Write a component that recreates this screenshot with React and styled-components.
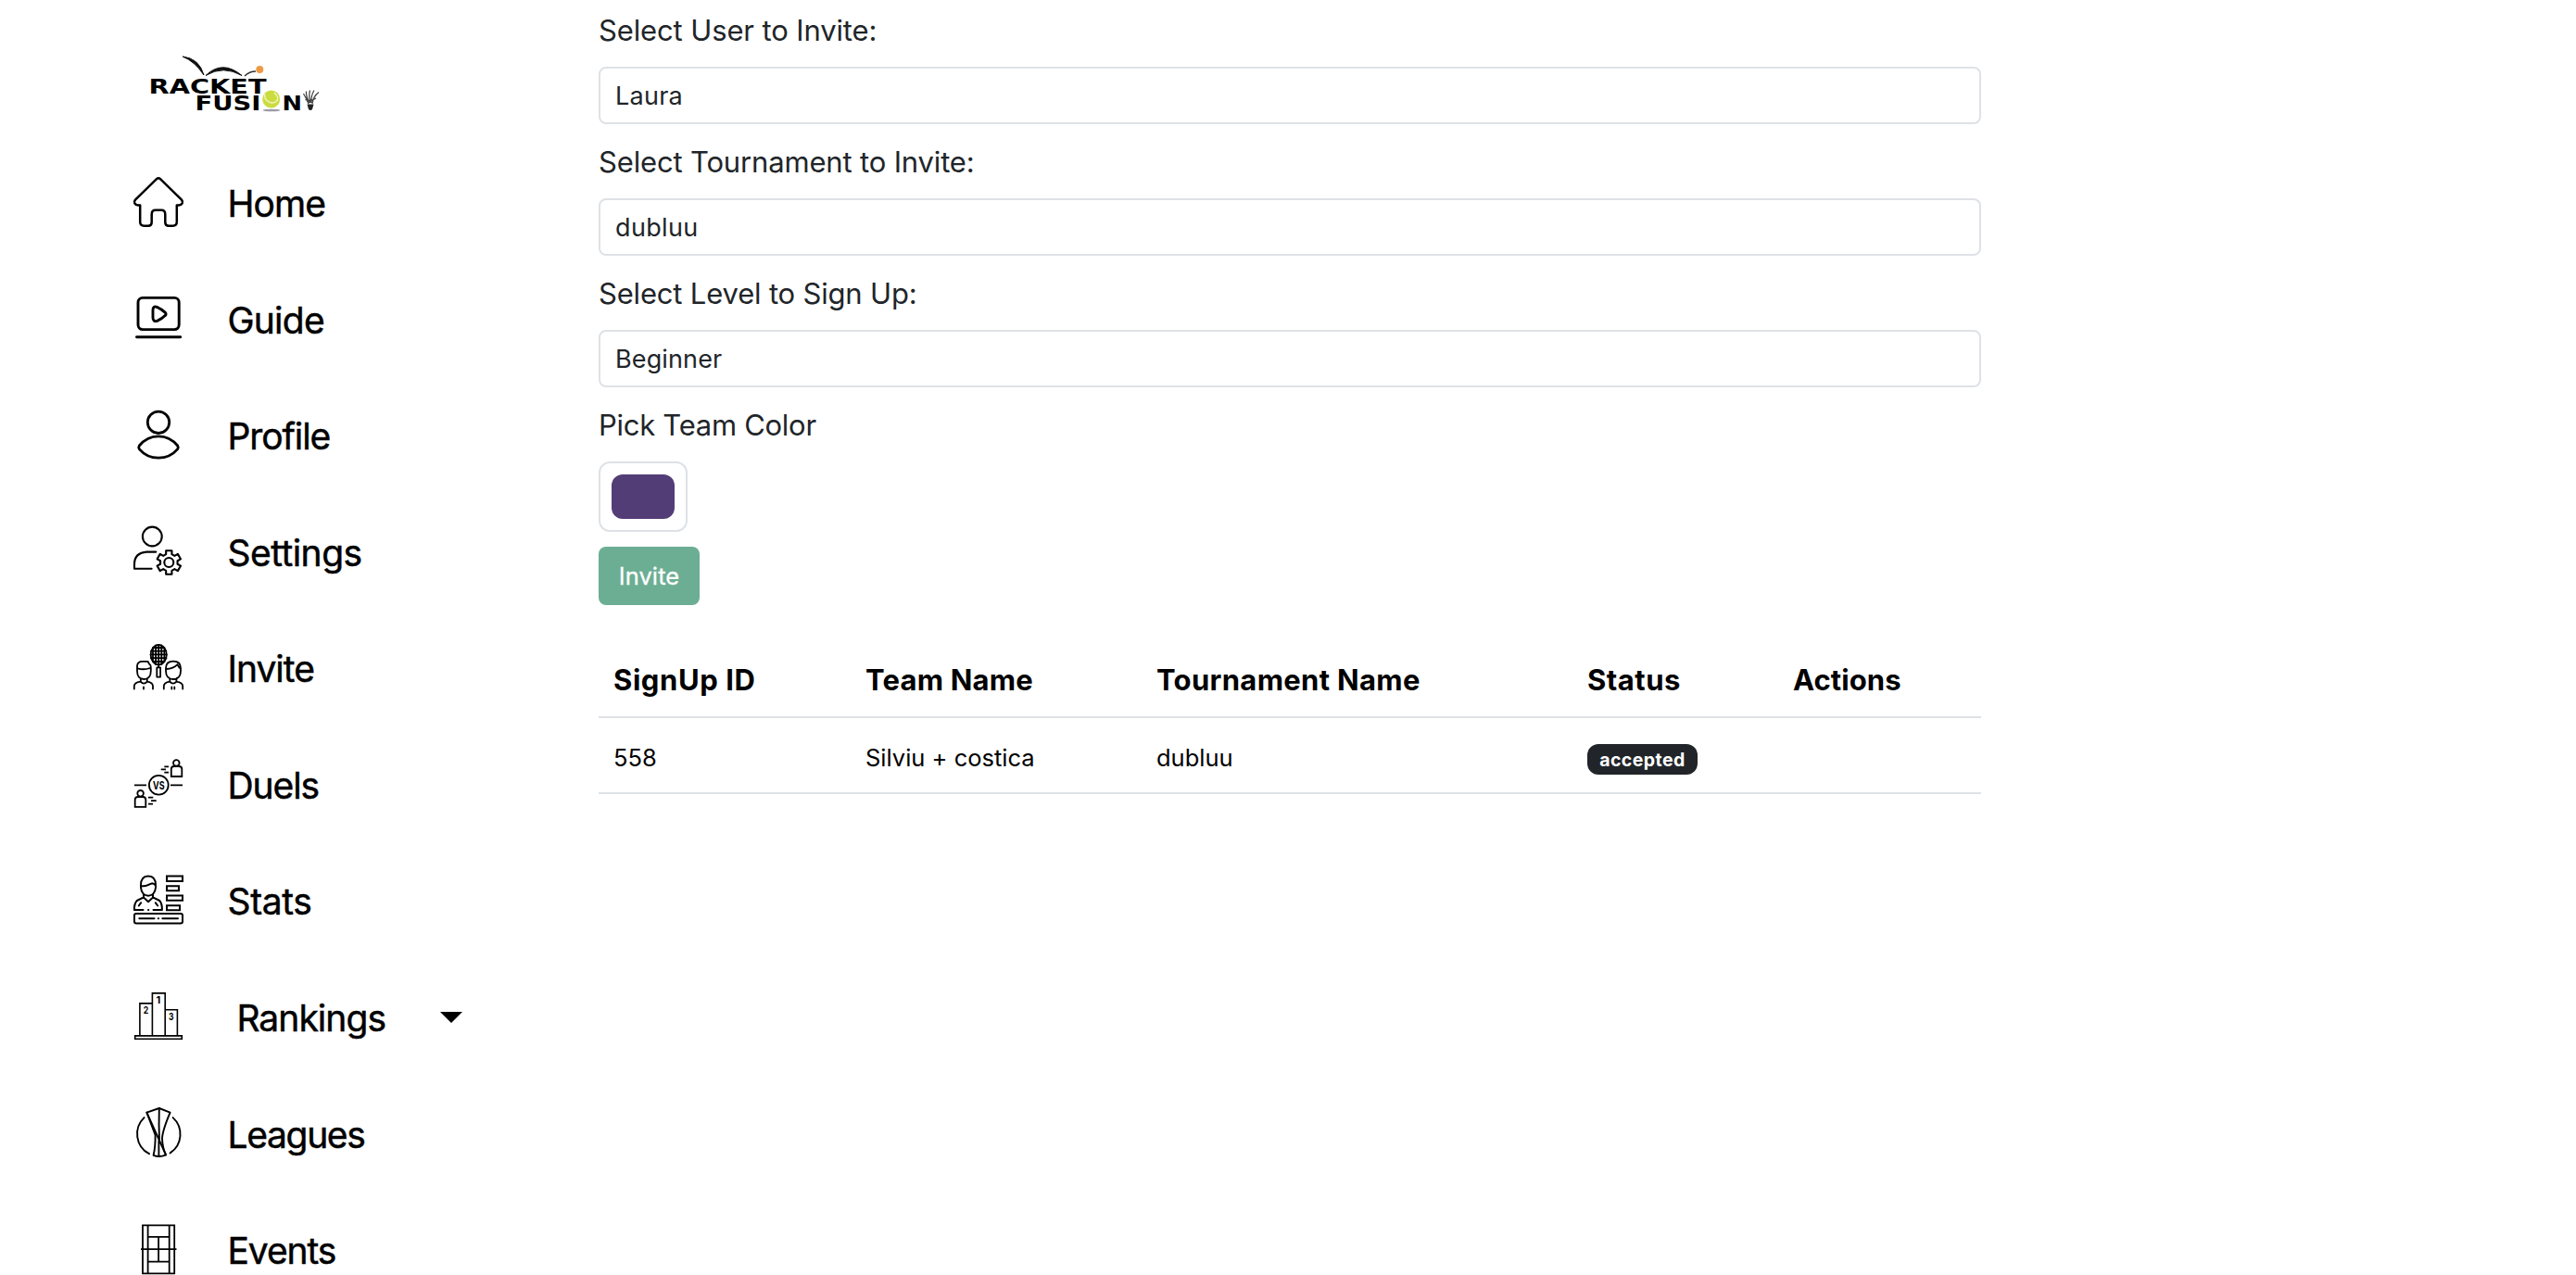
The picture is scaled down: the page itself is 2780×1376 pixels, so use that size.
import React from "react";
import styled, { createGlobalStyle } from "styled-components";

const GlobalStyle = createGlobalStyle`
  * { box-sizing: border-box; }
  body { margin: 0; background: #fff; }
`;

const Page = styled.div`
  display: flex;
  height: 100vh;
  overflow: hidden;
  background: #fff;
  color: #212529;
  font-family: Inter, "Liberation Sans", sans-serif;
  font-kerning: normal;
`;

const Sidebar = styled.aside`
  flex: none;
  width: 646px;
  padding: 50px 0 0 144px;
`;

const LogoLink = styled.div`
  height: 104.9px;
  padding-left: 6px;
  svg { display: block; }
`;

const NavItem = styled.div`
  display: flex;
  align-items: center;
  height: 125.55px;
`;

const NavIcon = styled.svg`
  flex: none;
  width: 54px;
  height: 54px;
  fill: none;
  stroke: #000;
  stroke-width: ${(p) => p.$stroke || 2};
  stroke-linecap: ${(p) => (p.$square ? "butt" : "round")};
  stroke-linejoin: ${(p) => (p.$square ? "miter" : "round")};
  overflow: visible;

  text {
    fill: #000;
    stroke: none;
    font-family: Inter, sans-serif;
    font-weight: 700;
    text-anchor: middle;
  }
`;

const NavLabel = styled.span`
  margin-left: ${(p) => (p.$indent ? 57.4 : 47.5)}px;
  padding-top: 5px;
  color: #000;
  font-size: 39px;
  font-weight: 400;
  line-height: 50px;
  letter-spacing: ${(p) => p.$track}px;
  -webkit-text-stroke: 0.5px #000;
  white-space: nowrap;
`;

const Caret = styled.i`
  margin: 4px 0 0 59px;
  border: 12px solid transparent;
  border-top-color: #000;
  border-bottom: 0;
`;

const Main = styled.main`
  width: 1492px;
  padding-top: 10px;
`;

const Field = styled.div`
  margin-bottom: ${(p) => (p.$last ? 16 : 17)}px;
`;

const Label = styled.label`
  display: block;
  margin-bottom: 16px;
  padding-bottom: 0;
  font-size: 31px;
  line-height: 46px;
  letter-spacing: ${(p) => p.$track}px;
`;

const FieldStack = styled.div`
  display: grid;
  gap: 18px;
  margin-bottom: 16px;
  ${Field} { margin-bottom: 0; }
`;

const SelectBox = styled.div`
  display: flex;
  align-items: center;
  height: 62px;
  padding: 0 16px;
  border: 2px solid #dee2e6;
  border-radius: 8px;
  font-size: 27px;
  letter-spacing: ${(p) => p.$track}px;
`;

const ColorBox = styled.div`
  width: 96px;
  height: 76px;
  padding: 12px;
  border: 2px solid #dee2e6;
  border-radius: 12px;
`;

const Swatch = styled.div`
  width: 68px;
  height: 48px;
  border-radius: 12px;
  background: #533d76;
`;

const Button = styled.button`
  display: block;
  width: 109px;
  height: 63px;
  padding: 0;
  border: 0;
  border-radius: 8px;
  background: #6cae94;
  color: #fff;
  font: 400 25.5px Inter, "Liberation Sans", sans-serif;
  letter-spacing: 0.09px;
  -webkit-text-stroke: 0.3px #fff;
`;

const Table = styled.div`
  margin-top: 40px;
  color: #000;
`;

const Row = styled.div`
  display: grid;
  grid-template-columns: 272px 314px 465px 222px 219px;
  align-items: center;
  height: 82px;
  border-bottom: 2px solid #dee2e6;
`;

const HeadCell = styled.div`
  padding: 0 0 0 16px;
  font-size: 31px;
  font-weight: 700;
  letter-spacing: ${(p) => p.$track}px;
`;

const Cell = styled.div`
  padding: 4px 0 0 16px;
  font-size: 25.5px;
`;

const BadgeCell = styled.div`
  padding: 8px 0 0 16px;
`;

const Badge = styled.span`
  display: flex;
  align-items: center;
  justify-content: center;
  width: 119px;
  height: 33px;
  padding-top: 1px;
  border-radius: 12px;
  background: #212529;
  color: #fff;
  font-size: 19.5px;
  font-weight: 700;
  letter-spacing: 0.45px;
`;

const Logo = () => (
  <svg width="210" height="80" viewBox="0 0 210 80">
    <g fill="#000" fontFamily="'DejaVu Sans', sans-serif" fontWeight="700" fontSize="21.5">
      <text x="10.5" y="50.6" textLength="127" lengthAdjust="spacingAndGlyphs">RACKET</text>
      <text x="60.5" y="68.6" textLength="71" lengthAdjust="spacingAndGlyphs">FUSI</text>
      <text x="154.5" y="68.6" textLength="21.5" lengthAdjust="spacingAndGlyphs">N</text>
    </g>
    <path d="M47 11Q65 13 70 31Q60 16 47 11Z" fill="#111" stroke="#111" strokeWidth="1" />
    <path d="M72 31.5Q90 14 111 31.5Q91 20 72 31.5Z" fill="#111" stroke="#111" strokeWidth="1" />
    <path d="M114 32Q119 27 126 27" fill="none" stroke="#333" strokeWidth="1.4" />
    <circle cx="130.3" cy="25" r="4" fill="#ee9a45" />
    <ellipse cx="143" cy="69" rx="9.5" ry="1.3" fill="#9b9ba8" />
    <circle cx="142.7" cy="57" r="9.5" fill="#cbdc40" />
    <path d="M135.5 51C135 60 144 64 149.5 58Q151 55 146 50" fill="none" stroke="#f0f4c4" strokeWidth="1.4" />
    <path d="M183 62Q180 55 177.5 51M184 61Q180 54 180.5 48.5M185 61Q183 53 184.5 47.5M186 61Q185.500 53 189 47.500M187 62Q188 54 194 49.500M179.500 57.500Q185 60 191 56" fill="none" stroke="#444" strokeWidth="1.3" />
    <path d="M181.500 62.500h7l-1.500 5.500q-2 2-4 0z" fill="#222" />
  </svg>
);

const HomeIcon = () => (
  <NavIcon viewBox="0 0 54 54" $stroke={2.5}>
    <path d="M25 2.2Q27 .4 29 2.2L52 24.6Q53.6 26.6 52.7 28.4Q51.6 30.4 49 30.4H46.8V48.5Q46.8 52.7 42.6 52.7H38Q34.3 52.7 34.3 49V40.5Q34.3 35.8 30.3 35.8H23.7Q19.7 35.8 19.7 40.5V49Q19.7 52.7 16 52.7H11.4Q7.2 52.7 7.2 48.5V30.4H5Q2.4 30.4 1.3 28.4Q.4 26.6 2 24.6Z" />
  </NavIcon>
);

const GuideIcon = () => (
  <NavIcon viewBox="0 0 54 54" $stroke={2.9}>
    <rect x="5" y="5.4" width="44.2" height="34.2" rx="5" />
    <path d="M3.5 47.8H50.7M21 18.5Q21 14 25.4 15.4Q31 18 34.4 21.4Q35.8 23 34.2 24.6Q31 28 25.6 30.4Q21 31.4 21 26.8Z" />
  </NavIcon>
);

const ProfileIcon = () => (
  <NavIcon viewBox="0 0 54 54" $stroke={2.8}>
    <circle cx="27" cy="13.8" r="11.7" />
    <path d="M6.3 39Q14.5 28.8 27 28.8T47.7 39Q48.8 40.8 47.7 42.6Q39.5 52.2 27 52.2T6.3 42.6Q5.2 40.8 6.3 39Z" />
  </NavIcon>
);

const gearPoints = () => {
  const pts = [];
  for (let i = 0; i < 6; i++) {
    const base = (i * Math.PI) / 3 - Math.PI / 2;
    [[-0.34, 9.4], [-0.24, 13.2], [0.24, 13.2], [0.34, 9.4]].forEach(([da, r]) => {
      pts.push(`${(38.3 + r * Math.cos(base + da)).toFixed(2)},${(40 + r * Math.sin(base + da)).toFixed(2)}`);
    });
  }
  return pts.join(" ");
};

const SettingsIcon = () => (
  <NavIcon viewBox="0 0 54 54" $stroke={2.1}>
    <circle cx="20.3" cy="12" r="10.4" />
    <path d="M24.3 28.6H14.5Q1 29.5 1 42V46.8H19.6" />
    <polygon points={gearPoints()} />
    <circle cx="38.3" cy="40" r="5" />
  </NavIcon>
);

const InviteIcon = () => (
  <NavIcon viewBox="0 0 54 54" $stroke={1.8}>
    <ellipse cx="27.2" cy="13.6" rx="8.6" ry="10.8" />
    <path d="M21 6V21M24.1 3.5V24M27.2 3V24.4M30.3 3.5V24M33.4 6V21M21 6H33.4M19 9.6H35.4M18.7 13.4H35.7M19 17.2H35.4M21 21H33.4" />
    <path d="M25.3 27.4H29.1V37.6H25.3ZM27.2 24.5V27" />
    <path d="M4 30V25.5Q4.5 20.8 9.5 20.8H15.5L17 23.5Q18.8 24.2 18.8 27V31Q18.8 40 11.4 40Q4 40 4 31ZM4.5 28.3Q11 30.3 18 28M7.8 39.2V42.6Q11.2 46.5 14.8 42.6V39.2M.8 50.6V47.5Q.8 43.6 7.5 42.6M21 50.6V47.5Q21 43.6 15 42.6M11 48.5V50.6" />
    <path d="M35 31V28Q35 20.6 43 20.6T51 28V31Q51 40 43 40T35 31ZM35.5 29Q43 28.800 47.500 24.200Q49 27.600 50.700 28.300M39.3 39.2V42.6Q42.7 46.5 46.4 42.6V39.2M32.8 50.6V47.5Q32.8 43.6 39.2 42.6M53.2 50.6V47.5Q53.2 43.6 46.4 42.6M41.3 48.5V50.6M44.3 48.5V50.6" />
  </NavIcon>
);

const DuelsIcon = () => (
  <NavIcon viewBox="0 0 54 54" $stroke={1.8} $square>
    <circle cx="27.3" cy="29.3" r="10.4" />
    <text x="27.4" y="33.5" fontSize="11.5" textLength="12.6" lengthAdjust="spacingAndGlyphs">VS</text>
    <path d="M1 29.3H14M40 29.3H53" />
    <circle cx="46.3" cy="5.4" r="3.3" />
    <path d="M40.8 20V12Q40.8 9 44 9H49Q52.3 9 52.3 12V20Z" />
    <circle cx="7.6" cy="38.3" r="3.3" />
    <path d="M1.7 52.8V45Q1.7 42 5 42H10Q13.3 42 13.3 45V52.8Z" />
    <path d="M33.3 9.3H38M29.7 12.3H35M33.3 15.7H38M16 42.6H21.3M19 46.2H24.7M16 49.6H21" />
  </NavIcon>
);

const StatsIcon = () => (
  <NavIcon viewBox="0 0 54 54" $stroke={2}>
    <path d="M8 11.5Q8 1.6 16 1.6T24 11.5V14Q23 22.3 16 22.8Q9 22.3 8 14ZM8 12.6Q15 12 20 9.3Q22 9.5 24 11.5" />
    <path d="M11 21.5V24.6L16 29.2L21 24.6V21.5M11 24.4L3.8 28Q.8 31 .9 38H10.500M21 24.4L28.2 28Q31 31 30.9 38H21.500M5.8 33.5L8.2 30.2M26.2 33.5L23.8 30.2M16 38H16.3" />
    <path strokeLinejoin="miter" d="M36 1.6H53V7H36ZM36 12.2H49V17.3H36ZM36 22.4H53V27.8H36ZM36 33.2H50V38.2H36Z" />
    <rect x="1" y="42" width="52" height="10.6" rx="2" />
    <path d="M6.3 47.3H22.5M26.8 47.3H27.1M31.3 47.3H48" />
  </NavIcon>
);

const RankingsIcon = () => (
  <NavIcon viewBox="0 0 54 54" $stroke={1.6} $square>
    <path d="M6.9 48.6V13.9H20.4M20.4 48.6V2.9H34.2V48.6M34.2 20.7H47.4V48.6M1.7 48.9H52.3V52.2H1.7Z" />
    <text x="13.4" y="25.2" fontSize="11" textLength="5.500" lengthAdjust="spacingAndGlyphs">2</text>
    <text x="26.800" y="13.8" fontSize="11">1</text>
    <text x="40.8" y="31.8" fontSize="11" textLength="5.500" lengthAdjust="spacingAndGlyphs">3</text>
  </NavIcon>
);

const LeaguesIcon = () => (
  <NavIcon viewBox="0 0 54 54" $stroke={1.9}>
    <path d="M11.6 11.1A24.3 24.3 0 0 0 17 50.2M42.6 11.1A24.3 24.3 0 0 1 39.6 49.4" />
    <path d="M14.4 5.6L27.8 1L39.6 5.6Q31 26 31 34Q31.2 43 35 51.4Q28 54.4 21.6 51.8Q23.8 43 23.6 30Z" />
    <path d="M14.4 5.6L35 51.4M27.8 1Q27.2 20 28 36M27.4 36V52.8" />
  </NavIcon>
);

const EventsIcon = () => (
  <NavIcon viewBox="0 0 54 54" $stroke={1.8} $square>
    <path d="M10 1.4H44.2V53.4H10ZM15.6 1.4V53.4M38.7 1.4V53.4M15.6 13.8H38.7M15.6 40.6H38.7M27.1 13.8V40.6M8 27.2H46.5" />
  </NavIcon>
);

const navigation = [
  { label: "Home", Icon: HomeIcon, track: -0.94 },
  { label: "Guide", Icon: GuideIcon, track: -0.77 },
  { label: "Profile", Icon: ProfileIcon, track: -1.1 },
  { label: "Settings", Icon: SettingsIcon, track: -0.53 },
  { label: "Invite", Icon: InviteIcon, track: -1 },
  { label: "Duels", Icon: DuelsIcon, track: -1.08 },
  { label: "Stats", Icon: StatsIcon, track: -0.38 },
  { label: "Rankings", Icon: RankingsIcon, track: -0.95, expandable: true },
  { label: "Leagues", Icon: LeaguesIcon, track: -1.34 },
  { label: "Events", Icon: EventsIcon, track: -1.08 },
];

const fields = [
  { label: "Select User to Invite:", labelTrack: -0.13, value: "Laura", track: 0.26 },
  { label: "Select Tournament to Invite:", labelTrack: -0.16, value: "dubluu", track: 0.35 },
  { label: "Select Level to Sign Up:", labelTrack: -0.18, value: "Beginner", track: 0.12 },
];

const columns = [
  { title: "SignUp ID", track: 0.58 },
  { title: "Team Name", track: 0.22 },
  { title: "Tournament Name", track: 0.32 },
  { title: "Status", track: 0.5 },
  { title: "Actions", track: 0.08 },
];

export default function App() {
  return (
    <Page>
      <GlobalStyle />
      <Sidebar>
        <LogoLink><Logo /></LogoLink>
        <nav>
          {navigation.map(({ label, Icon, track, expandable }) => (
            <NavItem key={label}>
              <Icon />
              <NavLabel $track={track} $indent={expandable}>{label}</NavLabel>
              {expandable && <Caret />}
            </NavItem>
          ))}
        </nav>
      </Sidebar>
      <Main>
        <FieldStack>
          {fields.map((f) => (
            <Field key={f.label}>
              <Label $track={f.labelTrack}>{f.label}</Label>
              <SelectBox $track={f.track}>{f.value}</SelectBox>
            </Field>
          ))}
          <Field>
            <Label $track={-0.28}>Pick Team Color</Label>
            <ColorBox><Swatch /></ColorBox>
          </Field>
        </FieldStack>
        <Button>Invite</Button>
        <Table>
          <Row>
            {columns.map((c) => (
              <HeadCell key={c.title} $track={c.track}>{c.title}</HeadCell>
            ))}
          </Row>
          <Row>
            <Cell>558</Cell>
            <Cell>Silviu + costica</Cell>
            <Cell>dubluu</Cell>
            <BadgeCell><Badge>accepted</Badge></BadgeCell>
            <Cell />
          </Row>
        </Table>
      </Main>
    </Page>
  );
}
